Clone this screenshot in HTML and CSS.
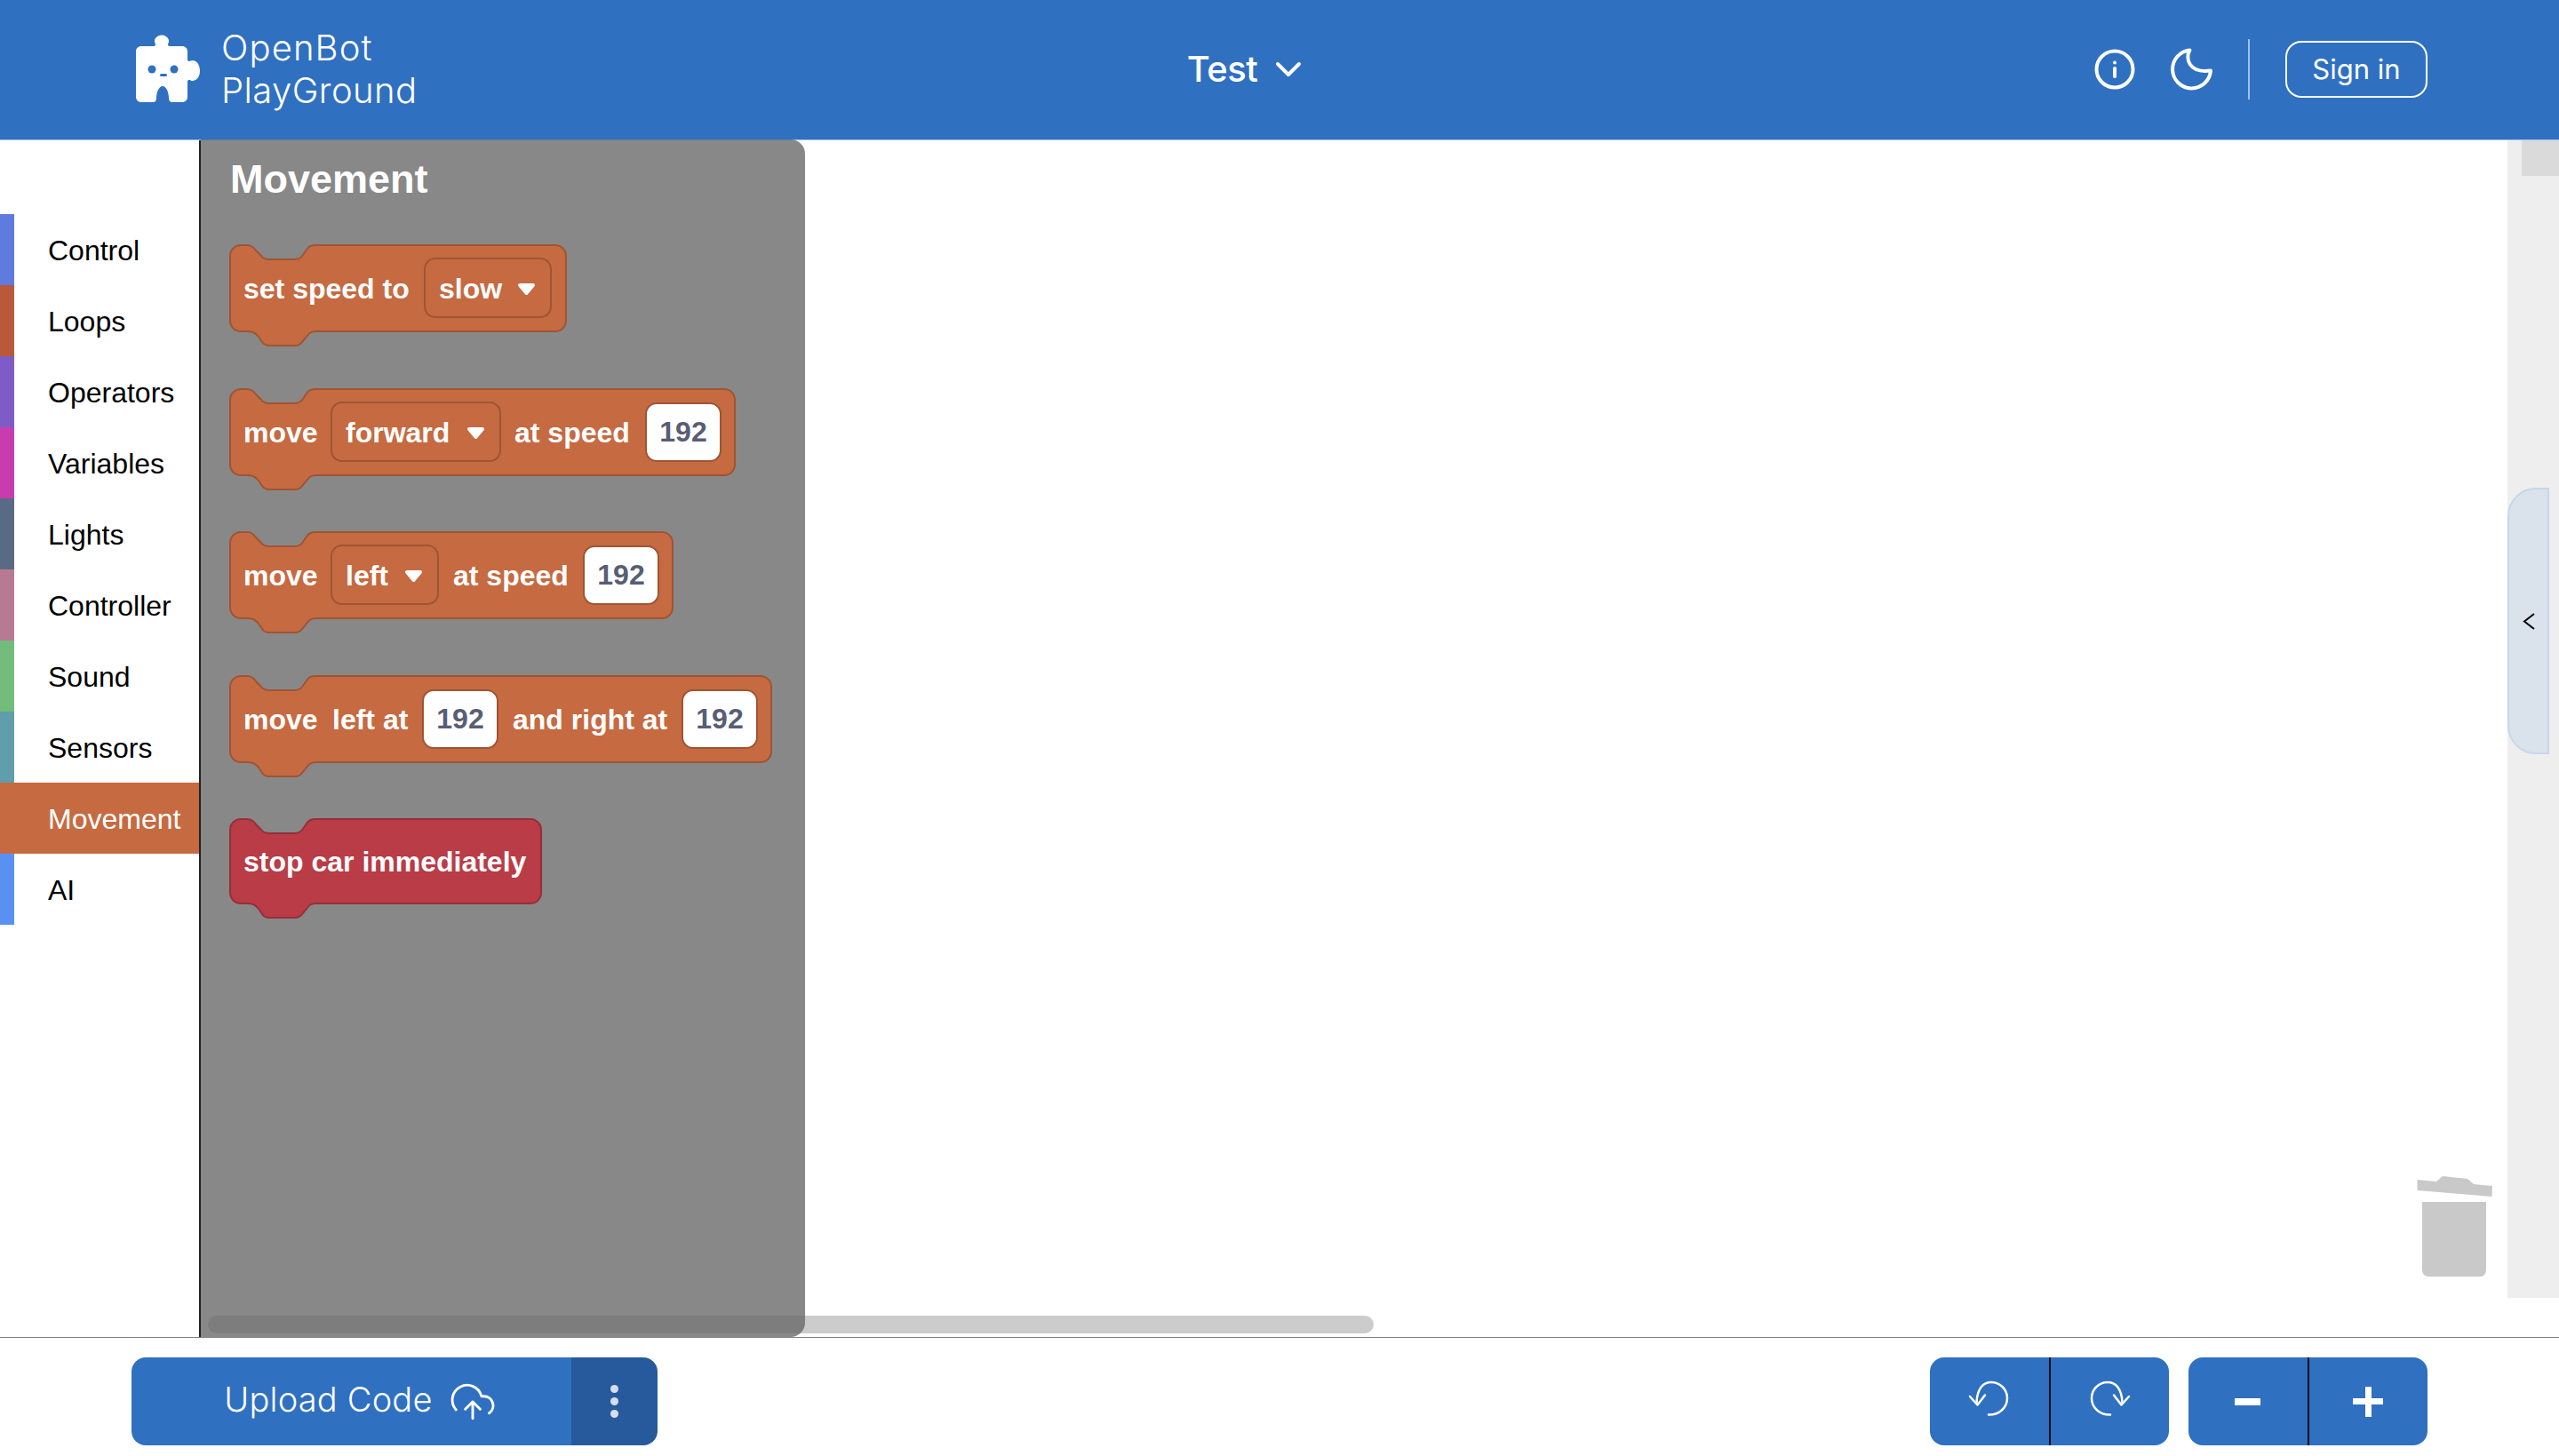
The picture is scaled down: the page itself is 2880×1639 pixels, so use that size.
FILE: index.html
```html
<!DOCTYPE html>
<html lang="en">
<head>
<meta charset="utf-8">
<title>OpenBot PlayGround</title>
<link rel="stylesheet" href="styles.css">
</head>
<body>
<div class="app">
  <header class="topbar">
    <div class="brand">
      <svg class="brand-logo" width="72" height="76" viewBox="0 0 72 76">
        <path class="logo-fill" d="M6 13H20C22 13 22.500 11 21.500 9.500C19.500 6 23 0.500 29 0.500C35 0.500 38.500 6 36.500 9.500C35.500 11 36 13 38 13H52C55.500 13 58 15.500 58 19V28C58 30 60 30.500 61.500 29.500C65 27.500 72 30.500 72 41C72 50 65 53.500 61.500 51.500C60 50.500 58 51 58 53V70C58 73.500 55.500 76 52 76H41C38 76 37 74 37 71.500C37 65 34 58 30 58C26 58 23 65 23 71.500C23 74 22 76 19 76H6C2.500 76 0 73.500 0 70V19C0 15.500 2.500 13 6 13Z"/>
        <ellipse class="logo-face" cx="18" cy="39" rx="4.500" ry="4.500"/>
        <ellipse class="logo-face" cx="43" cy="39" rx="4.500" ry="4.500"/>
        <rect class="logo-face" x="27" y="44" width="8" height="3" rx="1.500"/>
      </svg>
      <div class="brand-name"><span class="brand-top">OpenBot</span><span>PlayGround</span></div>
    </div>
    <button class="project-btn">Test
      <svg width="30" height="18" viewBox="0 0 30 18"><path class="stroke-w" d="M3 3L15 15L27 3"/></svg>
    </button>
    <div class="top-actions">
      <svg class="icon-info" width="48" height="48" viewBox="0 0 48 48"><circle class="stroke-w" cx="24" cy="24" r="20.500"/><circle class="icon-dot" cx="24" cy="16.500" r="2"/><path class="stroke-w" d="M24 23V32"/></svg>
      <svg class="icon-moon" width="56" height="56" viewBox="0 0 56 56"><path class="stroke-w" d="M49 29.500A21.500 21.500 0 1 1 25.500 6.500C20 15 24 33 49 29.500Z"/></svg>
      <span class="divider"></span>
      <button class="signin">Sign in</button>
    </div>
  </header>

  <main class="stage">
    <nav class="toolbox">
      <div class="cat cat-control">Control</div>
      <div class="cat cat-loops">Loops</div>
      <div class="cat cat-operators">Operators</div>
      <div class="cat cat-variables">Variables</div>
      <div class="cat cat-lights">Lights</div>
      <div class="cat cat-controller">Controller</div>
      <div class="cat cat-sound">Sound</div>
      <div class="cat cat-sensors">Sensors</div>
      <div class="cat cat-movement is-active">Movement</div>
      <div class="cat cat-ai">AI</div>
    </nav>

    <section class="workspace">
      <div class="hscroll"></div>
      <aside class="flyout">
        <h2 class="flyout-title">Movement</h2>
        <div class="blocks">
          <svg class="block" width="381" height="116" viewBox="0 0 381 116">
            <path class="shape shape-orange" d="M1 13A12 12 0 0 1 13 1H19C25 1 27 3 30 7L36 13C38 16 41 17 45 17H74C78 17 80 16 83 12L87 6C90 2 92 1 98 1H367A12 12 0 0 1 379 13V86A12 12 0 0 1 367 98H98C92 98 90 100 87 104L82 110C80 113 78 114 74 114H45C41 114 39 113 37 110L33 104C30 100 27 98 21 98H13A12 12 0 0 1 1 86Z"/>
            <text class="blk-t" x="16" y="61">set speed to</text>
            <rect class="dd" x="220" y="16" width="142" height="66" rx="12"/>
            <text class="blk-t" x="236" y="61">slow</text>
            <path class="arrow" d="M327 46H342L334.500 55Z"/>
          </svg>
          <svg class="block" width="571" height="116" viewBox="0 0 571 116">
            <path class="shape shape-orange" d="M1 13A12 12 0 0 1 13 1H19C25 1 27 3 30 7L36 13C38 16 41 17 45 17H74C78 17 80 16 83 12L87 6C90 2 92 1 98 1H557A12 12 0 0 1 569 13V86A12 12 0 0 1 557 98H98C92 98 90 100 87 104L82 110C80 113 78 114 74 114H45C41 114 39 113 37 110L33 104C30 100 27 98 21 98H13A12 12 0 0 1 1 86Z"/>
            <text class="blk-t" x="16" y="61">move</text>
            <rect class="dd" x="115" y="16" width="190" height="66" rx="12"/>
            <text class="blk-t" x="131" y="61">forward</text>
            <path class="arrow" d="M270 46H285L277.500 55Z"/>
            <text class="blk-t" x="321" y="61">at speed</text>
            <rect class="field" x="469" y="17" width="84" height="65" rx="12"/>
            <text class="blk-n" x="511" y="60">192</text>
          </svg>
          <svg class="block" width="501" height="116" viewBox="0 0 501 116">
            <path class="shape shape-orange" d="M1 13A12 12 0 0 1 13 1H19C25 1 27 3 30 7L36 13C38 16 41 17 45 17H74C78 17 80 16 83 12L87 6C90 2 92 1 98 1H487A12 12 0 0 1 499 13V86A12 12 0 0 1 487 98H98C92 98 90 100 87 104L82 110C80 113 78 114 74 114H45C41 114 39 113 37 110L33 104C30 100 27 98 21 98H13A12 12 0 0 1 1 86Z"/>
            <text class="blk-t" x="16" y="61">move</text>
            <rect class="dd" x="115" y="16" width="120" height="66" rx="12"/>
            <text class="blk-t" x="131" y="61">left</text>
            <path class="arrow" d="M200 46H215L207.500 55Z"/>
            <text class="blk-t" x="252" y="61">at speed</text>
            <rect class="field" x="399" y="17" width="84" height="65" rx="12"/>
            <text class="blk-n" x="441" y="60">192</text>
          </svg>
          <svg class="block" width="612" height="116" viewBox="0 0 612 116">
            <path class="shape shape-orange" d="M1 13A12 12 0 0 1 13 1H19C25 1 27 3 30 7L36 13C38 16 41 17 45 17H74C78 17 80 16 83 12L87 6C90 2 92 1 98 1H598A12 12 0 0 1 610 13V86A12 12 0 0 1 598 98H98C92 98 90 100 87 104L82 110C80 113 78 114 74 114H45C41 114 39 113 37 110L33 104C30 100 27 98 21 98H13A12 12 0 0 1 1 86Z"/>
            <text class="blk-t" x="16" y="61">move</text>
            <text class="blk-t" x="116" y="61">left at</text>
            <rect class="field" x="218" y="17" width="84" height="65" rx="12"/>
            <text class="blk-n" x="260" y="60">192</text>
            <text class="blk-t" x="319" y="61">and right at</text>
            <rect class="field" x="510" y="17" width="84" height="65" rx="12"/>
            <text class="blk-n" x="552" y="60">192</text>
          </svg>
          <svg class="block" width="353" height="113" viewBox="0 0 353 113">
            <path class="shape shape-red" d="M1 13A12 12 0 0 1 13 1H19C25 1 27 3 30 7L36 13C38 16 41 17 45 17H74C78 17 80 16 83 12L87 6C90 2 92 1 98 1H339A12 12 0 0 1 351 13V84A12 12 0 0 1 339 96H98C92 96 90 98 87 102L82 108C80 111 78 112 74 112H45C41 112 39 111 37 108L33 102C30 98 27 96 21 96H13A12 12 0 0 1 1 84Z"/>
            <text class="blk-t" x="16" y="60">stop car immediately</text>
          </svg>
        </div>
      </aside>
      <svg class="trash" width="88" height="118" viewBox="0 0 88 118">
        <path class="trash-fill" d="M0.500 8L22 10L29 4L57 7L64 13L85 15L84.500 27L0.500 20Z"/>
        <path class="trash-fill" d="M6 33H78V109C78 114 75 117 71 117H13C9 117 6 114 6 109Z"/>
      </svg>
    </section>

    <div class="rail">
      <div class="rail-thumb"></div>
      <button class="drawer-handle" aria-label="Open panel">
        <svg width="14" height="21" viewBox="0 0 14 21"><path class="chev" d="M13 2L2 10.500L13 19"/></svg>
      </button>
    </div>
  </main>

  <footer class="bottombar">
    <div class="upload">
      <button class="upload-main"><span class="upload-label">Upload Code</span>
        <svg class="upload-icon" width="52" height="52" viewBox="0 0 24 24"><path class="stroke-thin" d="M20.880 18.090A5 5 0 0 0 18 9H16.740A8 8 0 1 0 3 16.290"/><path class="stroke-thin" d="M16 16L12 12L8 16M12 12V21"/></svg>
      </button>
      <button class="upload-more" aria-label="More"><span></span><span></span><span></span></button>
    </div>
    <div class="controls">
      <div class="btn-group">
        <button class="tool" aria-label="Undo"><svg width="50" height="50" viewBox="0 0 50 50"><path class="stroke-ctl" d="M24 39.500C34 40 45 33 45 21C45 11 37 3 27 3C18 3 11 10 10.500 26"/><path class="stroke-ctl" d="M3 19L11.500 28.500L20 17.500"/></svg></button>
        <button class="tool tool-flip" aria-label="Redo"><svg width="50" height="50" viewBox="0 0 50 50"><path class="stroke-ctl" d="M24 39.500C34 40 45 33 45 21C45 11 37 3 27 3C18 3 11 10 10.500 26"/><path class="stroke-ctl" d="M3 19L11.500 28.500L20 17.500"/></svg></button>
      </div>
      <div class="btn-group">
        <button class="tool" aria-label="Zoom out"><span class="minus"></span></button>
        <button class="tool" aria-label="Zoom in"><span class="plus"></span></button>
      </div>
    </div>
  </footer>
</div>
</body>
</html>
```
FILE: styles.css
```css
* { box-sizing: border-box; }
html, body { margin: 0; padding: 0; height: 100%; background: #fff; overflow: hidden; }
button { font: inherit; color: inherit; background: none; border: 0; padding: 0; margin: 0; }
.app { height: 1639px; display: flex; flex-direction: column; font-family: Inter, "Liberation Sans", sans-serif; }

.topbar { height: 158px; flex: none; display: grid; grid-template-columns: 1fr auto 1fr; align-items: center; padding: 0 148px 2px 153px; background: #3070c1; border-bottom: 1px solid #a9c5e8; color: #fff; }
.brand { display: flex; align-items: center; gap: 24px; }
.brand-logo { display: block; margin-top: -2px; }
.logo-fill { fill: #fff; }
.logo-face { fill: #3070c1; }
.brand-name { display: flex; flex-direction: column; font-size: 40px; line-height: 48px; font-weight: 300; letter-spacing: 0.4px; }
.brand-top { letter-spacing: 1.1px; }
.project-btn { display: flex; align-items: center; gap: 20px; font-size: 40px; font-weight: 500; margin-right: 84px; letter-spacing: -0.5px; }
.stroke-w { fill: none; stroke: #fff; stroke-width: 4; stroke-linecap: round; stroke-linejoin: round; }
.icon-dot { fill: #fff; }
.top-actions { display: flex; align-items: center; justify-content: flex-end; }
.icon-moon { margin-left: 35px; }
.divider { width: 2px; height: 68px; background: #9fc3f0; margin-left: 35px; margin-right: 40px; }
.signin { width: 160px; height: 64px; border: 2px solid #fff; border-radius: 18px; font-size: 31px; font-weight: 400; }

.stage { flex: 1; display: flex; position: relative; min-height: 0; }
.toolbox { width: 226px; flex: none; padding-top: 83px; border-right: 2px solid #222; }
.cat { height: 80px; display: flex; align-items: center; padding: 2px 0 0 38px; border-left: 16px solid; font: 32px "Liberation Sans", Arial, sans-serif; color: #000; }
.cat-control { border-left-color: #5f7be0; }
.cat-loops { border-left-color: #b9593a; }
.cat-operators { border-left-color: #7d5cc8; }
.cat-variables { border-left-color: #c93cb0; }
.cat-lights { border-left-color: #596a85; }
.cat-controller { border-left-color: #b87a92; }
.cat-sound { border-left-color: #74bc7c; }
.cat-sensors { border-left-color: #5f9eaa; }
.cat-movement { border-left-color: #c66a41; }
.cat-ai { border-left-color: #5a90f2; }
.cat.is-active { background: #c66a41; color: #fff; }

.workspace { flex: 1; position: relative; min-width: 0; }
.hscroll { position: absolute; left: 8px; top: 1323px; width: 1312px; height: 20px; border-radius: 10px; background: #ccc; }
.flyout { position: absolute; left: 0; top: -1px; bottom: 0; width: 680px; padding: 0 0 0 32px; background: rgba(102, 102, 102, 0.78); border-radius: 0 16px 16px 0; }
.flyout-title { margin: 21px 0 0 1px; font: bold 45px/48px "Liberation Sans", Arial, sans-serif; color: #fff; }
.blocks { display: flex; flex-direction: column; gap: 45.5px; margin-top: 49px; }
.block { display: block; }
.shape { stroke-width: 2; }
.shape-orange { fill: #c66a41; stroke: #9e5534; }
.shape-red { fill: #b93c47; stroke: #943039; }
.dd { fill: #c66a41; stroke: #9e5534; stroke-width: 2; }
.field { fill: #fff; stroke: #9e5534; stroke-width: 2; }
.arrow { fill: #fff; stroke: #fff; stroke-width: 4; stroke-linejoin: round; }
.blk-t { font: bold 32px "Liberation Sans", Arial, sans-serif; fill: #fff; }
.blk-n { font: bold 32px "Liberation Sans", Arial, sans-serif; fill: #575e75; text-anchor: middle; }
.trash { position: absolute; right: 14px; top: 1162px; }
.trash-fill { fill: #c9c9c9; }

.rail { width: 58px; flex: none; height: 1303px; background: #eee; position: relative; }
.rail-thumb { position: absolute; right: 0; top: 0; width: 42px; height: 40px; background: #dadada; }
.drawer-handle { position: absolute; left: 0; top: 391px; width: 47px; height: 300px; display: flex; align-items: center; justify-content: center; background: #dae2ec; border: 2px solid #c6d8ea; border-radius: 32px 0 0 32px; }
.chev { fill: none; stroke: #000; stroke-width: 2; }

.bottombar { height: 134px; flex: none; display: flex; justify-content: space-between; padding: 22px 148px 0; border-top: 1px solid #808080; }
.upload { display: flex; width: 592px; height: 99px; border-radius: 16px; overflow: hidden; color: #fff; }
.upload-main { flex: 1; display: flex; align-items: center; justify-content: center; gap: 20px; background: #3070c1; font-size: 38px; font-weight: 300; letter-spacing: 0.2px; padding-left: 18px; }
.upload-label { margin-bottom: 5px; }
.upload-icon { width: 50px; height: 50px; }
.upload-more { width: 97px; display: flex; flex-direction: column; align-items: center; justify-content: center; gap: 5px; background: #275a9c; }
.upload-more span { width: 9px; height: 9px; border-radius: 50%; background: #d5deec; }
.stroke-thin { fill: none; stroke: #fff; stroke-width: 1.400; stroke-linecap: round; stroke-linejoin: round; }
.controls { display: flex; gap: 22px; }
.btn-group { display: flex; width: 269px; height: 99px; border-radius: 16px; overflow: hidden; background: #3070c1; }
.tool { flex: 1; display: flex; align-items: center; justify-content: center; }
.tool + .tool { border-left: 2px solid #111; }
.tool-flip svg { transform: scaleX(-1); }
.stroke-ctl { fill: none; stroke: #fff; stroke-width: 2.500; stroke-linecap: round; stroke-linejoin: round; }
.minus { display: block; width: 29px; height: 8px; background: #fff; }
.plus { display: block; width: 34px; height: 34px; background: linear-gradient(#fff, #fff) center / 100% 7px no-repeat, linear-gradient(#fff, #fff) center / 7px 100% no-repeat; }
```
